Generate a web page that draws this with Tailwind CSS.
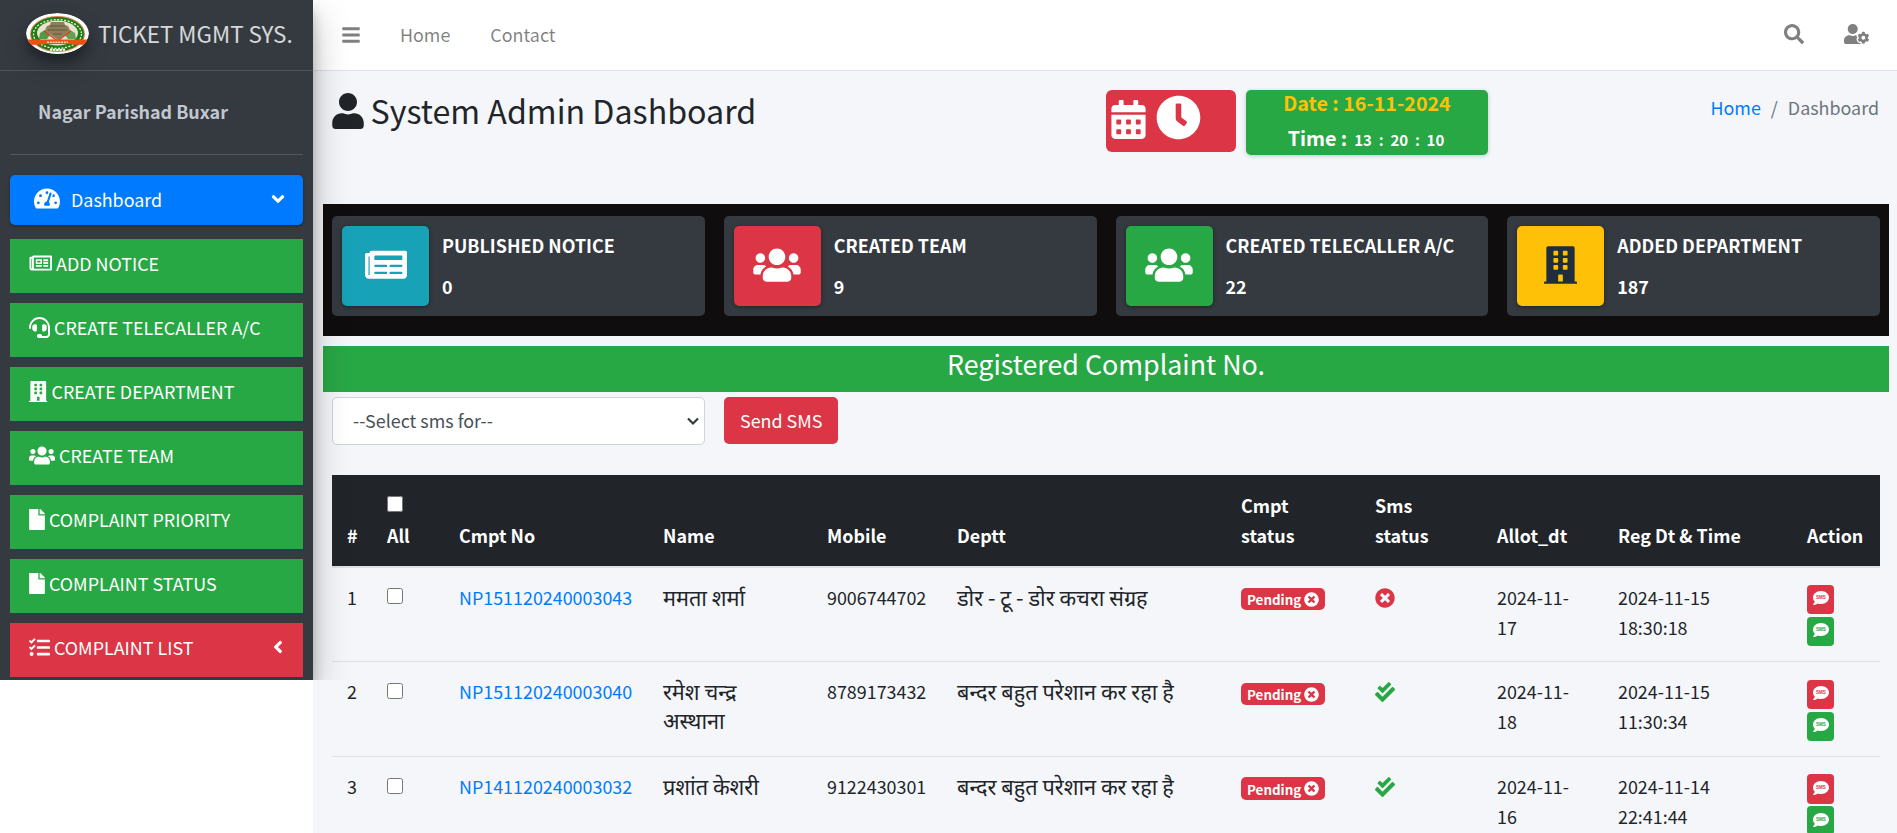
<!DOCTYPE html>
<html lang="en">
<head>
<meta charset="utf-8">
<title>Ticket Mgmt Sys. - Dashboard</title>
<script src="https://cdn.jsdelivr.net/npm/@tailwindcss/browser@4"></script>
</head>
<body class="flex h-[833px] items-start overflow-hidden bg-white font-['Noto_Sans_CJK_SC','Noto_Sans_Devanagari',sans-serif] text-[17.9px] leading-[30px] text-[#212529]">

<svg class="hidden">
  <symbol id="bars" viewBox="0 0 448 512"><path d="M16 132h416c8.837 0 16-7.163 16-16V76c0-8.837-7.163-16-16-16H16C7.163 60 0 67.163 0 76v40c0 8.837 7.163 16 16 16zm0 160h416c8.837 0 16-7.163 16-16v-40c0-8.837-7.163-16-16-16H16c-8.837 0-16 7.163-16 16v40c0 8.837 7.163 16 16 16zm0 160h416c8.837 0 16-7.163 16-16v-40c0-8.837-7.163-16-16-16H16c-8.837 0-16 7.163-16 16v40c0 8.837 7.163 16 16 16z"/></symbol>
  <symbol id="search" viewBox="0 0 512 512"><path d="M505 442.7L405.3 343c-4.5-4.5-10.6-7-17-7H372c27.6-35.3 44-79.7 44-128C416 93.1 322.9 0 208 0S0 93.1 0 208s93.1 208 208 208c48.3 0 92.7-16.4 128-44v16.3c0 6.4 2.5 12.5 7 17l99.7 99.7c9.4 9.4 24.6 9.4 33.9 0l28.3-28.3c9.4-9.4 9.4-24.6.1-34zM208 336c-70.7 0-128-57.2-128-128 0-70.7 57.2-128 128-128 70.7 0 128 57.2 128 128 0 70.7-57.2 128-128 128z"/></symbol>
  <symbol id="user" viewBox="0 0 448 512"><path d="M224 256c70.7 0 128-57.3 128-128S294.7 0 224 0 96 57.3 96 128s57.3 128 128 128zm89.6 32h-16.7c-22.2 10.2-46.9 16-72.9 16s-50.6-5.8-72.9-16h-16.7C60.2 288 0 348.2 0 422.4V464c0 26.5 21.5 48 48 48h352c26.5 0 48-21.5 48-48v-41.6c0-74.2-60.2-134.4-134.4-134.4z"/></symbol>
  <symbol id="user-cog" viewBox="0 0 640 512"><path d="M610.5 373.3c2.6-14.1 2.6-28.5 0-42.6l25.8-14.9c3-1.7 4.3-5.2 3.3-8.5-6.7-21.6-18.2-41.2-33.2-57.4-2.3-2.5-6-3.1-9-1.4l-25.8 14.9c-10.9-9.3-23.4-16.5-36.9-21.3v-29.8c0-3.4-2.4-6.4-5.7-7.1-22.3-5-45-4.8-66.2 0-3.3.7-5.7 3.7-5.7 7.1v29.8c-13.5 4.8-26 12-36.9 21.3l-25.8-14.9c-2.9-1.7-6.7-1.1-9 1.4-15 16.2-26.5 35.8-33.2 57.4-1 3.3.4 6.8 3.3 8.5l25.8 14.9c-2.6 14.1-2.6 28.5 0 42.6l-25.8 14.9c-3 1.7-4.3 5.2-3.3 8.5 6.7 21.6 18.2 41.1 33.2 57.4 2.3 2.5 6 3.1 9 1.4l25.8-14.9c10.9 9.3 23.4 16.5 36.9 21.3v29.8c0 3.4 2.4 6.4 5.7 7.1 22.3 5 45 4.8 66.2 0 3.3-.7 5.7-3.7 5.7-7.1v-29.8c13.5-4.8 26-12 36.9-21.3l25.8 14.9c2.9 1.7 6.7 1.1 9-1.4 15-16.2 26.5-35.8 33.2-57.4 1-3.3-.4-6.8-3.3-8.5l-25.8-14.9zM496 400.5c-26.8 0-48.5-21.8-48.5-48.5s21.8-48.5 48.5-48.5 48.5 21.8 48.5 48.5-21.7 48.5-48.5 48.5zM224 256c70.7 0 128-57.3 128-128S294.7 0 224 0 96 57.3 96 128s57.3 128 128 128zm201.2 226.5c-2.3-1.2-4.6-2.6-6.8-3.9l-7.9 4.6c-6 3.4-12.8 5.3-19.6 5.3-10.9 0-21.4-4.6-28.9-12.6-18.3-19.8-32.3-43.9-40.2-69.6-5.5-17.7 1.9-36.4 17.9-45.7l7.9-4.6c-.1-2.6-.1-5.2 0-7.8l-7.9-4.6c-16-9.2-23.4-28-17.9-45.7.9-2.9 2.2-5.8 3.2-8.7-3.8-.3-7.5-1.2-11.4-1.2h-16.7c-22.2 10.2-46.9 16-72.9 16s-50.6-5.8-72.9-16h-16.7C60.2 288 0 348.2 0 422.4V464c0 26.5 21.5 48 48 48h352c10.1 0 19.5-3.2 27.2-8.5-1.2-3.8-2-7.7-2-11.8v-9.2z"/></symbol>
  <symbol id="gauge" viewBox="0 0 576 512"><path d="M288 32C128.94 32 0 160.94 0 320c0 52.8 14.25 102.26 39.06 144.8 5.61 9.62 16.3 15.2 27.44 15.2h443c11.14 0 21.83-5.58 27.44-15.2C561.75 422.26 576 372.8 576 320c0-159.06-128.94-288-288-288zm0 64c14.71 0 26.58 10.13 30.32 23.65-1.11 2.26-2.64 4.23-3.45 6.67l-9.22 27.67c-5.13 3.49-10.97 6.01-17.64 6.01-17.67 0-32-14.33-32-32S270.33 96 288 96zM96 384c-17.67 0-32-14.33-32-32s14.33-32 32-32 32 14.33 32 32-14.33 32-32 32zm48-160c-17.67 0-32-14.33-32-32s14.33-32 32-32 32 14.33 32 32-14.33 32-32 32zm246.77-72.41l-61.33 184C343.13 347.33 352 364.54 352 384c0 11.72-3.38 22.55-8.88 32H232.88c-5.5-9.45-8.88-20.28-8.88-32 0-33.94 26.5-61.43 59.9-63.59l61.34-184.01c4.17-12.56 17.73-19.45 30.36-15.17 12.57 4.19 19.35 17.79 15.17 30.36zm14.66 57.2l15.52-46.55c3.47-1.29 7.13-2.23 11.05-2.23 17.67 0 32 14.33 32 32s-14.33 32-32 32c-11.38-.01-20.89-6.28-26.57-15.22zM480 384c-17.67 0-32-14.33-32-32s14.33-32 32-32 32 14.33 32 32-14.33 32-32 32z"/></symbol>
  <symbol id="news-o" viewBox="0 0 576 512"><path d="M552 64H112c-20.858 0-38.643 13.377-45.248 32H24c-13.255 0-24 10.745-24 24v272c0 30.928 25.072 56 56 56h496c13.255 0 24-10.745 24-24V88c0-13.255-10.745-24-24-24zM48 392V144h16v248c0 4.411-3.589 8-8 8s-8-3.589-8-8zm480 8H111.422c.374-2.614.578-5.283.578-8V112h416v288zM172 280h136c6.627 0 12-5.373 12-12v-96c0-6.627-5.373-12-12-12H172c-6.627 0-12 5.373-12 12v96c0 6.627 5.373 12 12 12zm28-80h80v40h-80v-40zm-40 140v-24c0-6.627 5.373-12 12-12h136c6.627 0 12 5.373 12 12v24c0 6.627-5.373 12-12 12H172c-6.627 0-12-5.373-12-12zm192 0v-24c0-6.627 5.373-12 12-12h104c6.627 0 12 5.373 12 12v24c0 6.627-5.373 12-12 12H364c-6.627 0-12-5.373-12-12zm0-144v-24c0-6.627 5.373-12 12-12h104c6.627 0 12 5.373 12 12v24c0 6.627-5.373 12-12 12H364c-6.627 0-12-5.373-12-12zm0 72v-24c0-6.627 5.373-12 12-12h104c6.627 0 12 5.373 12 12v24c0 6.627-5.373 12-12 12H364c-6.627 0-12-5.373-12-12z"/></symbol>
  <symbol id="news" viewBox="0 0 576 512"><path fill-rule="evenodd" d="M552 64H88c-13.255 0-24 10.745-24 24v8H24c-13.255 0-24 10.745-24 24v272c0 30.928 25.072 56 56 56h472c26.51 0 48-21.490 48-48V88c0-13.255-10.745-24-24-24zM56 400a8 8 0 0 1-8-8V144h16v248a8 8 0 0 1-8 8zM140 352h152a12 12 0 0 1 12 12v8a12 12 0 0 1-12 12H140a12 12 0 0 1-12-12v-8a12 12 0 0 1 12-12zM348 352h152a12 12 0 0 1 12 12v8a12 12 0 0 1-12 12H348a12 12 0 0 1-12-12v-8a12 12 0 0 1 12-12zM140 256h152a12 12 0 0 1 12 12v8a12 12 0 0 1-12 12H140a12 12 0 0 1-12-12v-8a12 12 0 0 1 12-12zM348 256h152a12 12 0 0 1 12 12v8a12 12 0 0 1-12 12H348a12 12 0 0 1-12-12v-8a12 12 0 0 1 12-12zM140 128h360a12 12 0 0 1 12 12v40a12 12 0 0 1-12 12H140a12 12 0 0 1-12-12v-40a12 12 0 0 1 12-12z"/></symbol>
  <symbol id="headset" viewBox="0 0 512 512"><path d="M192 208c0-17.67-14.33-32-32-32h-16c-35.35 0-64 28.65-64 64v48c0 35.35 28.65 64 64 64h16c17.67 0 32-14.33 32-32V208zm176 144c35.35 0 64-28.65 64-64v-48c0-35.35-28.65-64-64-64h-16c-17.67 0-32 14.33-32 32v112c0 17.67 14.33 32 32 32h16zM256 0C113.18 0 4.58 118.83 0 256v16c0 8.84 7.16 16 16 16h16c8.84 0 16-7.16 16-16v-16c0-114.69 93.31-208 208-208s208 93.31 208 208h-.12c.08 2.43.12 165.72.12 165.72 0 23.35-18.93 42.28-42.28 42.28H320c0-26.51-21.49-48-48-48h-32c-26.51 0-48 21.49-48 48s21.49 48 48 48h181.72c49.86 0 90.28-40.42 90.28-90.28V256C507.42 118.83 398.82 0 256 0z"/></symbol>
  <symbol id="building" viewBox="0 0 448 512"><path fill-rule="evenodd" d="M436 480h-20V24c0-13.255-10.745-24-24-24H56C42.745 0 32 10.745 32 24v456H12c-6.627 0-12 5.373-12 12v20h448v-20c0-6.627-5.373-12-12-12zM128 76a12 12 0 0 1 12-12h40a12 12 0 0 1 12 12v40a12 12 0 0 1-12 12h-40a12 12 0 0 1-12-12zM256 76a12 12 0 0 1 12-12h40a12 12 0 0 1 12 12v40a12 12 0 0 1-12 12h-40a12 12 0 0 1-12-12zM128 172a12 12 0 0 1 12-12h40a12 12 0 0 1 12 12v40a12 12 0 0 1-12 12h-40a12 12 0 0 1-12-12zM256 172a12 12 0 0 1 12-12h40a12 12 0 0 1 12 12v40a12 12 0 0 1-12 12h-40a12 12 0 0 1-12-12zM128 268a12 12 0 0 1 12-12h40a12 12 0 0 1 12 12v40a12 12 0 0 1-12 12h-40a12 12 0 0 1-12-12zM256 268a12 12 0 0 1 12-12h40a12 12 0 0 1 12 12v40a12 12 0 0 1-12 12h-40a12 12 0 0 1-12-12zM192 480v-84a12 12 0 0 1 12-12h40a12 12 0 0 1 12 12v84z"/></symbol>
  <symbol id="users" viewBox="0 0 640 512"><path d="M96 224c35.3 0 64-28.7 64-64s-28.7-64-64-64-64 28.7-64 64 28.7 64 64 64zm448 0c35.3 0 64-28.7 64-64s-28.7-64-64-64-64 28.7-64 64 28.7 64 64 64zm32 32h-64c-17.6 0-33.5 7.1-45.1 18.6 40.3 22.1 68.9 62 75.1 109.4h66c17.7 0 32-14.3 32-32v-32c0-35.3-28.7-64-64-64zm-256 0c61.9 0 112-50.1 112-112S381.9 32 320 32 208 82.1 208 144s50.1 112 112 112zm76.8 32h-8.3c-20.8 10-43.9 16-68.5 16s-47.6-6-68.5-16h-8.3C179.6 288 128 339.6 128 403.2V432c0 26.5 21.5 48 48 48h288c26.5 0 48-21.5 48-48v-28.8c0-63.6-51.6-115.2-115.2-115.2zm-223.7-13.4C161.5 263.1 145.6 256 128 256H64c-35.3 0-64 28.7-64 64v32c0 17.7 14.3 32 32 32h65.9c6.3-47.4 34.9-87.3 75.2-109.4z"/></symbol>
  <symbol id="file" viewBox="0 0 384 512"><path d="M224 136V0H24C10.7 0 0 10.7 0 24v464c0 13.3 10.7 24 24 24h336c13.3 0 24-10.7 24-24V160H248c-13.2 0-24-10.8-24-24zm160-14.1v6.1H256V0h6.1c6.4 0 12.5 2.5 17 7l97.9 98c4.5 4.5 7 10.6 7 16.9z"/></symbol>
  <symbol id="tasks" viewBox="0 0 512 512"><path d="M139.61 35.5a12 12 0 0 0-17 0L58.93 98.81l-22.7-22.12a12 12 0 0 0-17 0L3.53 92.41a12 12 0 0 0 0 17l47.59 47.4a12.78 12.78 0 0 0 17.61 0l15.59-15.62L156.52 69a12.09 12.09 0 0 0 .09-17zm0 159.19a12 12 0 0 0-17 0l-63.68 63.72-22.7-22.1a12 12 0 0 0-17 0L3.53 252a12 12 0 0 0 0 17L51 316.5a12.77 12.77 0 0 0 17.6 0l15.7-15.69 72.2-72.22a12 12 0 0 0 .09-16.9zM64 368c-26.49 0-48.59 21.5-48.59 48S37.53 464 64 464a48 48 0 0 0 0-96zm432 16H208a16 16 0 0 0-16 16v32a16 16 0 0 0 16 16h288a16 16 0 0 0 16-16v-32a16 16 0 0 0-16-16zm0-320H208a16 16 0 0 0-16 16v32a16 16 0 0 0 16 16h288a16 16 0 0 0 16-16V80a16 16 0 0 0-16-16zm0 160H208a16 16 0 0 0-16 16v32a16 16 0 0 0 16 16h288a16 16 0 0 0 16-16v-32a16 16 0 0 0-16-16z"/></symbol>
  <symbol id="angle" viewBox="0 0 256 512"><path d="M31.7 239l136-136c9.4-9.4 24.6-9.4 33.9 0l22.6 22.6c9.4 9.4 9.4 24.6 0 33.9L127.9 256l96.4 96.4c9.4 9.4 9.4 24.6 0 33.9L201.7 409c-9.4 9.4-24.6 9.4-33.9 0l-136-136c-9.5-9.4-9.5-24.6-.1-34z"/></symbol>
  <symbol id="calendar" viewBox="0 0 448 512"><path fill-rule="evenodd" d="M0 464c0 26.5 21.500 48 48 48h352c26.5 0 48-21.5 48-48V192H0zM64 268a12 12 0 0 1 12-12h40a12 12 0 0 1 12 12v40a12 12 0 0 1-12 12H76a12 12 0 0 1-12-12zM192 268a12 12 0 0 1 12-12h40a12 12 0 0 1 12 12v40a12 12 0 0 1-12 12h-40a12 12 0 0 1-12-12zM320 268a12 12 0 0 1 12-12h40a12 12 0 0 1 12 12v40a12 12 0 0 1-12 12h-40a12 12 0 0 1-12-12zM64 396a12 12 0 0 1 12-12h40a12 12 0 0 1 12 12v40a12 12 0 0 1-12 12H76a12 12 0 0 1-12-12zM192 396a12 12 0 0 1 12-12h40a12 12 0 0 1 12 12v40a12 12 0 0 1-12 12h-40a12 12 0 0 1-12-12zM320 396a12 12 0 0 1 12-12h40a12 12 0 0 1 12 12v40a12 12 0 0 1-12 12h-40a12 12 0 0 1-12-12zM400 64h-48V16c0-8.8-7.2-16-16-16h-32c-8.8 0-16 7.2-16 16v48H160V16c0-8.8-7.2-16-16-16h-32c-8.8 0-16 7.2-16 16v48H48C21.5 64 0 85.5 0 112v48h448v-48c0-26.5-21.5-48-48-48z"/></symbol>
  <symbol id="clock" viewBox="0 0 512 512"><path d="M256,8C119,8,8,119,8,256S119,504,256,504,504,393,504,256,393,8,256,8Zm92.49,313h0l-20,25a16,16,0,0,1-22.49,2.5h0l-67-49.72a40,40,0,0,1-15-31.23V112a16,16,0,0,1,16-16h32a16,16,0,0,1,16,16V256l58,42.5A16,16,0,0,1,348.49,321Z"/></symbol>
  <symbol id="times" viewBox="0 0 512 512"><path d="M256 8C119 8 8 119 8 256s111 248 248 248 248-111 248-248S393 8 256 8zm121.6 313.1c4.7 4.7 4.7 12.3 0 17L338 377.6c-4.7 4.7-12.3 4.7-17 0L256 312l-65.1 65.6c-4.7 4.7-12.3 4.7-17 0L134.4 338c-4.7-4.7-4.7-12.3 0-17l65.6-65-65.6-65.1c-4.7-4.7-4.7-12.3 0-17l39.6-39.6c4.7-4.7 12.3-4.7 17 0l65 65.7 65.1-65.6c4.7-4.7 12.3-4.7 17 0l39.6 39.6c4.7 4.7 4.7 12.3 0 17L312 256l65.6 65.1z"/></symbol>
  <symbol id="checks" viewBox="0 0 512 512"><path d="M505 174.8l-39.6-39.6c-9.4-9.4-24.6-9.4-33.9 0L192 374.7 80.6 263.2c-9.4-9.4-24.6-9.4-33.9 0L7 302.9c-9.4 9.4-9.4 24.6 0 34L175 505c9.4 9.4 24.6 9.4 33.9 0l296-296.2c9.4-9.5 9.4-24.7.1-34zm-324.3 106c6.2 6.3 16.4 6.3 22.6 0l208-208.2c6.2-6.3 6.2-16.4 0-22.6L366.1 4.7c-6.2-6.3-16.4-6.3-22.6 0L192 156.2l-55.4-55.5c-6.2-6.3-16.4-6.3-22.6 0L68.7 146c-6.2 6.3-6.2 16.4 0 22.6l112 112.2z"/></symbol>
  <symbol id="bubble" viewBox="0 0 512 512"><path d="M256 32C114.600 32 0 125.1 0 240c0 49.6 21.4 95 57 130.7C44.5 421.1 2.7 466 2.2 466.500c-2.2 2.3-2.8 5.7-1.5 8.7S4.8 480 8 480c66.3 0 116-31.8 140.6-51.4 32.7 12.3 69 19.4 107.4 19.4 141.4 0 256-93.1 256-208S397.4 32 256 32z"/></symbol>
</svg>

<!-- Sidebar -->
<aside class="relative z-10 flex h-[680px] w-[313px] shrink-0 flex-col bg-[#343a40] text-white shadow-[0_17px_35px_rgba(0,0,0,0.25),0_12px_12px_rgba(0,0,0,0.22)] [clip-path:inset(0_-80px_0_0)]">
  <a class="flex h-[71px] shrink-0 items-center border-b border-[#4b545c] pl-[26px] text-[22.4px] text-white/80">
    <svg class="mb-[3px] h-[41px] w-[63px] rounded-[50%] shadow-[0_12px_25px_rgba(0,0,0,0.19),0_8px_8px_rgba(0,0,0,0.23)]" viewBox="0 0 63 41">
      <ellipse cx="31.500" cy="20.500" rx="31.500" ry="20.500" fill="#fff"/>
      <ellipse cx="31.500" cy="21" rx="27.500" ry="18" fill="#d9855f"/>
      <ellipse cx="31.500" cy="21" rx="26.500" ry="17" fill="#1c7d12"/>
      <ellipse cx="31.500" cy="21" rx="24" ry="14.400" fill="none" stroke="#e8f2df" stroke-width="1.300" stroke-dasharray="2 1.500"/>
      <ellipse cx="31.500" cy="20" rx="20.500" ry="12.500" fill="#e9e2cf"/>
      <path d="M14 20l5-3 5 5-3 4h-8z" fill="#4f9a45"/><path d="M49 20l-5-3-5 5 3 4h8z" fill="#5fa354"/>
      <path d="M19 18q1-6 5-6l1-3h13l1 3q4 0 5 6l-12 9z" fill="#8d8059"/>
      <path d="M24 13h15M22 17h19M27 21h9" stroke="#5e563d" stroke-width="1"/>
      <path d="M18 18l13.500 10L45 18" fill="none" stroke="#d64123" stroke-width="1.300"/>
      <path d="M1.500 26.500h60l-2.500 5.500q-27-2-55 0z" fill="#f04e12"/>
      <path d="M21 29.300h21" stroke="#ffd3b8" stroke-width="1.600" stroke-dasharray="2 .8"/>
      <path d="M24 36.500q7 1 15 0" fill="none" stroke="#fff" stroke-width="2" stroke-dasharray="2.500 .7"/>
    </svg>
    <span class="ml-[9px] -mt-[5px] whitespace-nowrap">TICKET MGMT SYS.</span>
  </a>
  <div class="mx-[10px] flex h-[84px] shrink-0 items-center border-b border-[#4f5962] pl-[28px] pb-[3px] font-bold text-[#c2c7d0]">Nagar Parishad Buxar</div>
  <nav class="mx-[10px] mt-[20px] flex flex-col">
    <a class="mb-[14px] flex h-[50px] items-center rounded-[5px] bg-[#007bff] pl-[24px] pr-[20px] shadow-[0_1px_4px_rgba(0,0,0,0.12),0_1px_2px_rgba(0,0,0,0.24)]">
      <svg class="mb-[3px] h-[23px] w-[26px] fill-white"><use href="#gauge"/></svg><span class="ml-[11px] -mt-[3px] grow">Dashboard</span>
      <svg class="mb-[3px] h-[20px] w-[10px] -rotate-90 fill-white"><use href="#angle"/></svg>
    </a>
    <a class="mb-[10px] flex h-[54px] items-center bg-[#28a745] pb-[6px] pl-[19px]"><svg class="h-[20px] w-[23.500px] fill-white"><use href="#news-o"/></svg><span class="ml-[3.500px]">ADD NOTICE</span></a>
    <a class="mb-[10px] flex h-[54px] items-center bg-[#28a745] pb-[6px] pl-[19px]"><svg class="h-[21px] w-[21px] fill-white"><use href="#headset"/></svg><span class="ml-[4px]">CREATE TELECALLER A/C</span></a>
    <a class="mb-[10px] flex h-[54px] items-center bg-[#28a745] pb-[6px] pl-[19px]"><svg class="h-[21px] w-[18.500px] fill-white"><use href="#building"/></svg><span class="ml-[4px]">CREATE DEPARTMENT</span></a>
    <a class="mb-[10px] flex h-[54px] items-center bg-[#28a745] pb-[6px] pl-[19px]"><svg class="h-[21px] w-[26px] fill-white"><use href="#users"/></svg><span class="ml-[4px]">CREATE TEAM</span></a>
    <a class="mb-[10px] flex h-[54px] items-center bg-[#28a745] pb-[6px] pl-[19px]"><svg class="h-[21px] w-[16px] fill-white"><use href="#file"/></svg><span class="ml-[4px]">COMPLAINT PRIORITY</span></a>
    <a class="mb-[10px] flex h-[54px] items-center bg-[#28a745] pb-[6px] pl-[19px]"><svg class="h-[21px] w-[16px] fill-white"><use href="#file"/></svg><span class="ml-[4px]">COMPLAINT STATUS</span></a>
    <a class="flex h-[54px] items-center bg-[#dc3545] pb-[6px] pl-[19px] pr-[20px]"><svg class="h-[21px] w-[21px] fill-white"><use href="#tasks"/></svg><span class="ml-[4px] grow">COMPLAINT LIST</span><svg class="mb-px h-[20px] w-[10px] fill-white"><use href="#angle"/></svg></a>
  </nav>
</aside>

<main class="flex h-[833px] min-w-0 flex-1 flex-col bg-[#f4f6f9]">
  <!-- Top bar -->
  <header class="flex h-[71px] shrink-0 items-center border-b border-[#dee2e6] bg-white pl-[29px] pr-[28px] text-black/50">
    <svg class="mb-px h-[20px] w-[18px] fill-[#808080]"><use href="#bars"/></svg>
    <a class="ml-[40px] -mt-[3px]">Home</a>
    <a class="ml-[40px] -mt-[3px] grow">Contact</a>
    <svg class="mb-[2px] h-[20px] w-[20px] fill-[#808080]"><use href="#search"/></svg>
    <svg class="mb-[2px] ml-[40px] h-[20px] w-[25px] fill-[#808080]"><use href="#user-cog"/></svg>
  </header>

  <!-- Page heading -->
  <section class="flex h-[133px] shrink-0 items-start pl-[19px] pr-[18px] pt-[19px]">
    <div class="-mt-px flex w-[774px] items-center">
      <svg class="h-[36px] w-[32px] fill-[#212529]"><use href="#user"/></svg>
      <h1 class="ml-[6.500px] text-[32.200px] leading-[43px]">System Admin Dashboard</h1>
    </div>
    <div class="flex h-[62px] w-[130px] items-end rounded-[6px] bg-[#dc3545] pb-[13px] pl-[5px]">
      <svg class="h-[39px] w-[35px] fill-white"><use href="#calendar"/></svg>
      <svg class="-mb-px ml-[10px] h-[45px] w-[45px] fill-white"><use href="#clock"/></svg>
    </div>
    <div class="ml-[10px] flex h-[65px] w-[242px] flex-col items-center rounded-[5px] bg-[#28a745] text-[19.700px] font-bold text-white shadow-[0_1px_4px_rgba(0,0,0,0.2)]">
      <div class="-mt-[2px] h-[36px] text-[#ffc107]">Date : 16-11-2024</div>
      <div class="-ml-[2px] flex items-baseline whitespace-pre">Time :<span class="ml-[7px] text-[15px]">13  :  20  :  10</span></div>
    </div>
    <div class="ml-auto mt-[2px] flex text-[#6c757d]"><a class="text-[#007bff]">Home</a><span class="mx-[10px]">/</span><span>Dashboard</span></div>
  </section>

  <!-- Counters -->
  <section class="ml-[10px] mr-[8px] flex h-[132px] shrink-0 items-start gap-[19px] bg-[#0f0d0d] px-[9px] pt-[12px] font-bold text-white">
    <div class="flex h-[100px] flex-1 rounded-[5px] bg-[#343a40] p-[10px]">
      <div class="flex h-[80px] w-[87px] items-center justify-center rounded-[5px] bg-[#17a2b8] shadow-[0_1px_4px_rgba(0,0,0,0.4)]"><svg class="mb-[2px] h-[37.500px] w-[42px] fill-white"><use href="#news"/></svg></div>
      <div class="ml-[13px] mt-[4px] flex flex-col gap-[11px]"><span>PUBLISHED NOTICE</span><span>0</span></div>
    </div>
    <div class="flex h-[100px] flex-1 rounded-[5px] bg-[#343a40] p-[10px]">
      <div class="flex h-[80px] w-[87px] items-center justify-center rounded-[5px] bg-[#dc3545] shadow-[0_1px_4px_rgba(0,0,0,0.4)]"><svg class="mb-[2px] h-[38px] w-[48px] fill-white"><use href="#users"/></svg></div>
      <div class="ml-[13px] mt-[4px] flex flex-col gap-[11px]"><span>CREATED TEAM</span><span>9</span></div>
    </div>
    <div class="flex h-[100px] flex-1 rounded-[5px] bg-[#343a40] p-[10px]">
      <div class="flex h-[80px] w-[87px] items-center justify-center rounded-[5px] bg-[#28a745] shadow-[0_1px_4px_rgba(0,0,0,0.4)]"><svg class="mb-[2px] h-[38px] w-[48px] fill-white"><use href="#users"/></svg></div>
      <div class="ml-[13px] mt-[4px] flex flex-col gap-[11px]"><span>CREATED TELECALLER A/C</span><span>22</span></div>
    </div>
    <div class="flex h-[100px] flex-1 rounded-[5px] bg-[#343a40] p-[10px]">
      <div class="flex h-[80px] w-[87px] items-center justify-center rounded-[5px] bg-[#ffc107] shadow-[0_1px_4px_rgba(0,0,0,0.4)]"><svg class="mb-[2px] h-[38px] w-[33px] fill-[#1f2d3d]"><use href="#building"/></svg></div>
      <div class="ml-[13px] mt-[4px] flex flex-col gap-[11px]"><span>ADDED DEPARTMENT</span><span>187</span></div>
    </div>
  </section>

  <h2 class="ml-[10px] mr-[8px] mt-[10px] h-[46px] shrink-0 bg-[#28a745] text-center text-[26.800px] leading-[35px] text-white">Registered Complaint No.</h2>

  <!-- SMS form -->
  <form class="flex h-[83px] shrink-0 items-start gap-[19px] pl-[19px] pt-[5px]">
    <div class="relative h-[48px] w-[373px]">
      <select class="h-full w-full appearance-none rounded-[5px] border border-[#ced4da] bg-white px-[20px] pb-[2px] text-[#495057]"><option>--Select sms for--</option></select>
      <svg class="absolute right-[6px] top-[20px] h-[9px] w-[12px]" viewBox="0 0 12 9" fill="none" stroke="#343a40" stroke-width="2.200"><path d="M1 1.500l5 5 5-5"/></svg>
    </div>
    <button type="button" class="h-[47px] rounded-[5px] bg-[#dc3545] px-[16px] pb-[2px] text-white">Send SMS</button>
  </form>

  <!-- Complaints -->
  <div class="ml-[19px] w-[1548px] shrink-0">
    <div class="grid h-[93px] grid-cols-[40px_72px_204px_164px_130px_284px_134px_122px_121px_189px_88px] items-end border-b-2 border-[#dee2e6] bg-[#212529] bg-clip-padding pb-[16px] font-bold text-white [&>div]:pl-[15px]">
      <div>#</div><div><input type="checkbox" class="mb-[8px] block h-[16px] w-[16px]">All</div><div>Cmpt No</div><div>Name</div><div>Mobile</div><div>Deptt</div><div>Cmpt<br>status</div><div>Sms<br>status</div><div>Allot_dt</div><div>Reg Dt &amp; Time</div><div>Action</div>
    </div>

    <div class="grid h-[93px] grid-cols-[40px_72px_204px_164px_130px_284px_134px_122px_121px_189px_88px] items-start pt-[14px] [&>div]:pl-[15px]">
      <div>1</div><div><input type="checkbox" class="mt-[6px] block h-[16px] w-[16px]"></div><div class="text-[#007bff]">NP151120240003043</div><div class="text-[21.700px] leading-[29px]">ममता शर्मा</div><div>9006744702</div><div class="text-[21.700px] leading-[29px]">डोर - टू - डोर कचरा संग्रह</div>
      <div><span class="mt-[6px] flex h-[22px] w-[84px] items-center rounded-[5px] bg-[#dc3545] pl-[6px] text-[13.400px] font-bold leading-[22px] text-white">Pending<svg class="ml-[3px] h-[15px] w-[15px] fill-white"><use href="#times"/></svg></span></div>
      <div><svg class="mt-[6px] h-[20px] w-[20px] fill-[#dc3545]"><use href="#times"/></svg></div>
      <div>2024-11-<br>17</div><div>2024-11-15<br>18:30:18</div>
      <div class="flex flex-col gap-[3px] pt-[3px]">
        <a class="flex h-[29px] w-[27px] items-start justify-center rounded-[4px] bg-[#dc3545] pt-[5px]"><svg class="h-[16px] w-[16px] fill-white" viewBox="0 0 16 16"><use href="#bubble"/><text x="8" y="9.200" text-anchor="middle" class="fill-[#dc3545] font-['Liberation_Sans'] text-[4.500px] font-bold">SMS</text></svg></a>
        <a class="flex h-[29px] w-[27px] items-start justify-center rounded-[4px] bg-[#28a745] pt-[5px]"><svg class="h-[16px] w-[16px] fill-white" viewBox="0 0 16 16"><use href="#bubble"/><text x="8" y="9.200" text-anchor="middle" class="fill-[#28a745] font-['Liberation_Sans'] text-[4.500px] font-bold">SMS</text></svg></a>
      </div>
    </div>

    <div class="grid h-[95px] grid-cols-[40px_72px_204px_164px_130px_284px_134px_122px_121px_189px_88px] items-start border-t border-[#dee2e6] pt-[14px] [&>div]:pl-[15px]">
      <div>2</div><div><input type="checkbox" class="mt-[7px] block h-[16px] w-[16px]"></div><div class="text-[#007bff]">NP151120240003040</div><div class="text-[21.700px] leading-[29px]">रमेश चन्द्र<br>अस्थाना</div><div>8789173432</div><div class="text-[21.700px] leading-[29px]">बन्दर बहुत परेशान कर रहा है</div>
      <div><span class="mt-[7px] flex h-[22px] w-[84px] items-center rounded-[5px] bg-[#dc3545] pl-[6px] text-[13.400px] font-bold leading-[22px] text-white">Pending<svg class="ml-[3px] h-[15px] w-[15px] fill-white"><use href="#times"/></svg></span></div>
      <div><svg class="mt-[6px] h-[20px] w-[20px] fill-[#28a745]"><use href="#checks"/></svg></div>
      <div>2024-11-<br>18</div><div>2024-11-15<br>11:30:34</div>
      <div class="flex flex-col gap-[3px] pt-[4px]">
        <a class="flex h-[29px] w-[27px] items-start justify-center rounded-[4px] bg-[#dc3545] pt-[5px]"><svg class="h-[16px] w-[16px] fill-white" viewBox="0 0 16 16"><use href="#bubble"/><text x="8" y="9.200" text-anchor="middle" class="fill-[#dc3545] font-['Liberation_Sans'] text-[4.500px] font-bold">SMS</text></svg></a>
        <a class="flex h-[29px] w-[27px] items-start justify-center rounded-[4px] bg-[#28a745] pt-[5px]"><svg class="h-[16px] w-[16px] fill-white" viewBox="0 0 16 16"><use href="#bubble"/><text x="8" y="9.200" text-anchor="middle" class="fill-[#28a745] font-['Liberation_Sans'] text-[4.500px] font-bold">SMS</text></svg></a>
      </div>
    </div>

    <div class="grid h-[95px] grid-cols-[40px_72px_204px_164px_130px_284px_134px_122px_121px_189px_88px] items-start border-t border-[#dee2e6] pt-[14px] [&>div]:pl-[15px]">
      <div>3</div><div><input type="checkbox" class="mt-[7px] block h-[16px] w-[16px]"></div><div class="text-[#007bff]">NP141120240003032</div><div class="text-[21.700px] leading-[29px]">प्रशांत केशरी</div><div>9122430301</div><div class="text-[21.700px] leading-[29px]">बन्दर बहुत परेशान कर रहा है</div>
      <div><span class="mt-[6px] flex h-[23px] w-[84px] items-center rounded-[5px] bg-[#dc3545] pl-[6px] text-[13.400px] font-bold leading-[22px] text-white">Pending<svg class="ml-[3px] h-[15px] w-[15px] fill-white"><use href="#times"/></svg></span></div>
      <div><svg class="mt-[6px] h-[20px] w-[20px] fill-[#28a745]"><use href="#checks"/></svg></div>
      <div>2024-11-<br>16</div><div>2024-11-14<br>22:41:44</div>
      <div class="flex flex-col gap-[2px] pt-[3px]">
        <a class="flex h-[30px] w-[27px] items-start justify-center rounded-[4px] bg-[#dc3545] pt-[6px]"><svg class="h-[16px] w-[16px] fill-white" viewBox="0 0 16 16"><use href="#bubble"/><text x="8" y="9.200" text-anchor="middle" class="fill-[#dc3545] font-['Liberation_Sans'] text-[4.500px] font-bold">SMS</text></svg></a>
        <a class="flex h-[29px] w-[27px] items-start justify-center rounded-[4px] bg-[#28a745] pt-[6px]"><svg class="h-[16px] w-[16px] fill-white" viewBox="0 0 16 16"><use href="#bubble"/><text x="8" y="9.200" text-anchor="middle" class="fill-[#28a745] font-['Liberation_Sans'] text-[4.500px] font-bold">SMS</text></svg></a>
      </div>
    </div>
  </div>
</main>
</body>
</html>
